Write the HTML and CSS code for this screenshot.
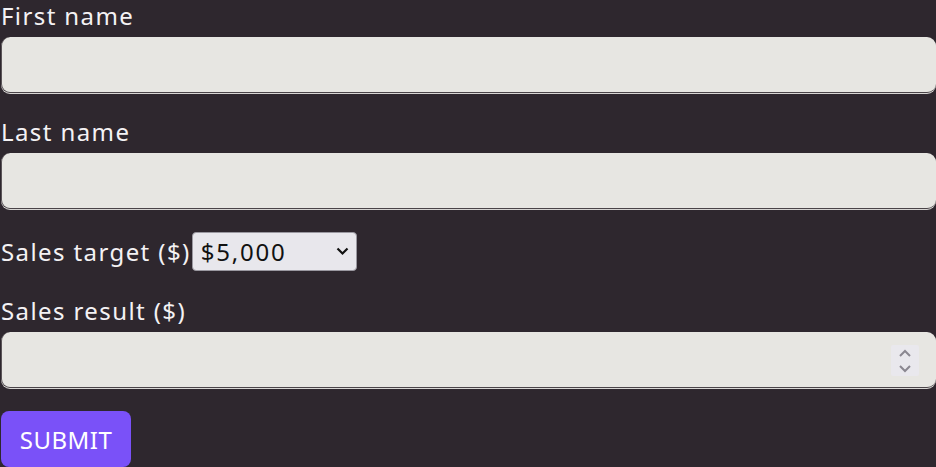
FILE: index.html
```html
<!DOCTYPE html>
<html lang="en">
<head>
<meta charset="utf-8">
<title>Sales form</title>
<link rel="stylesheet" href="styles.css">
</head>
<body>
<form class="form">
  <label class="label" for="first">First name</label>
  <input class="field" id="first" type="text">

  <label class="label" for="last">Last name</label>
  <input class="field" id="last" type="text">

  <div class="inline-row">
    <label class="label inline" for="target">Sales target ($)</label>
    <div class="select-wrap">
      <select class="select" id="target">
        <option>$5,000</option>
        <option>$10,000</option>
      </select>
      <svg class="chev" width="13" height="9" viewBox="0 0 13 9"><path d="M1.5 1.5 L6.5 6.5 L11.5 1.5" fill="none" stroke="#111" stroke-width="2.2"/></svg>
    </div>
  </div>

  <label class="label" for="result">Sales result ($)</label>
  <div class="num-wrap">
    <input class="field num" id="result" type="number">
    <span class="spin">
      <svg width="14" height="24" viewBox="0 0 14 24"><path d="M2 7 L7 2 L12 7" fill="none" stroke="#8a8790" stroke-width="2"/><path d="M2 17 L7 22 L12 17" fill="none" stroke="#8a8790" stroke-width="2"/></svg>
    </span>
  </div>

  <button class="submit" type="button">SUBMIT</button>
</form>
</body>
</html>
```

FILE: styles.css
```css
html, body {
  margin: 0;
  padding: 0;
  background: #2e272e;
  height: 100%;
}
body {
  font-family: "Noto Sans", "DejaVu Sans", sans-serif;
  color: #f4f2f4;
  overflow: hidden;
}
.form {
  display: flex;
  flex-direction: column;
  align-items: flex-start;
}
.label {
  display: block;
  font-size: 24px;
  line-height: 32px;
  padding-left: 1px;
  margin-bottom: 5px;
  letter-spacing: 1.4px;
}
.field {
  box-sizing: border-box;
  width: calc(100% - 1px);
  margin-left: 1px;
  height: 56px;
  border: none;
  border-left: 1px solid #5a5458;
  border-bottom: 1px solid #4a4448;
  box-shadow: 0 1px 0 #d8d6d4;
  border-radius: 9px;
  background: #e7e6e2;
  margin-bottom: 23px;
  font: inherit;
  font-size: 22px;
  padding: 0 12px;
  outline: none;
}
.inline-row {
  display: flex;
  align-items: center;
  margin-bottom: 24px;
  height: 39px;
}
.label.inline {
  margin: 0;
}
.select-wrap {
  position: relative;
  margin-left: 1px;
}
.select {
  appearance: none;
  -webkit-appearance: none;
  box-sizing: border-box;
  width: 165px;
  height: 39px;
  background: #e8e7ec;
  border: 1px solid #9a98a0;
  border-radius: 4px;
  font-family: inherit;
  font-size: 24px;
  color: #111;
  padding: 0 0 0 8px;
  letter-spacing: 1.8px;
}
.chev {
  position: absolute;
  right: 8px;
  top: 15px;
  pointer-events: none;
}
.num-wrap {
  position: relative;
  width: 100%;
}
.num {
  -moz-appearance: textfield;
  appearance: textfield;
}
.num::-webkit-inner-spin-button,
.num::-webkit-outer-spin-button {
  -webkit-appearance: none;
  margin: 0;
}
.spin {
  position: absolute;
  right: 17px;
  top: 13px;
  width: 28px;
  height: 31px;
  background: #e9e8ed;
  display: flex;
  align-items: center;
  justify-content: center;
  border-radius: 2px;
}
.submit {
  margin-left: 1px;
  height: 56px;
  width: 130px;
  background: #7a51f8;
  color: #ffffff;
  border: none;
  border-radius: 8px;
  font-family: inherit;
  font-size: 24px;
  letter-spacing: 0.5px;
}
```
